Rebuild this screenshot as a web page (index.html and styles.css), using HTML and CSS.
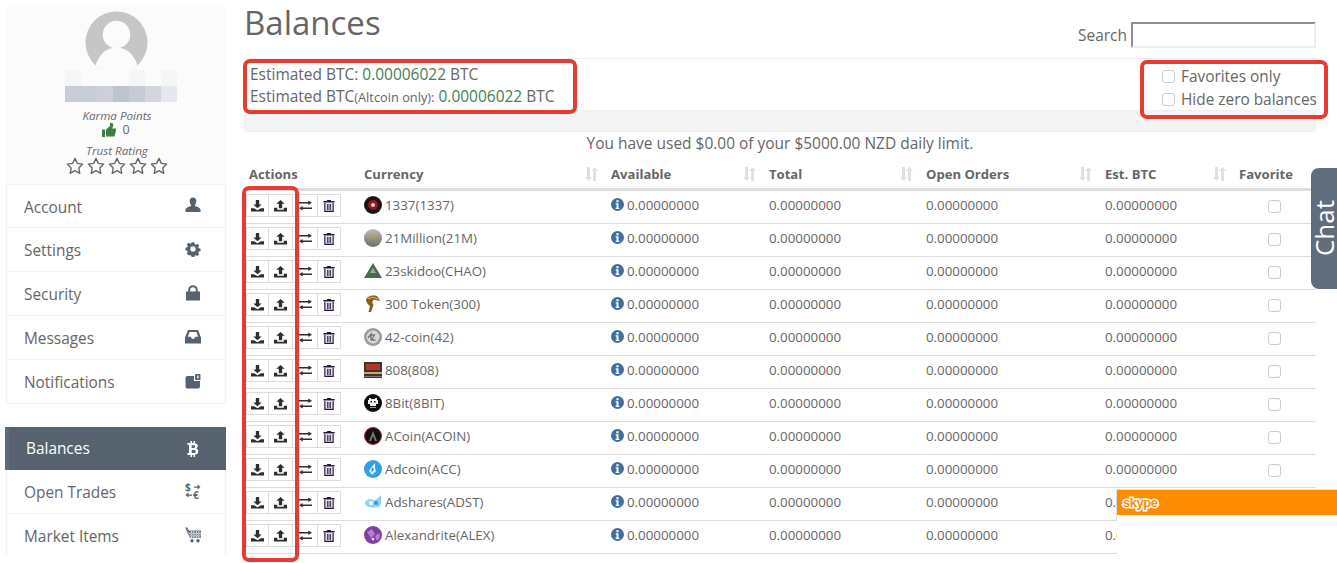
FILE: index.html
```html
<!DOCTYPE html>
<html lang="en">
<head>
<meta charset="utf-8">
<title>Balances</title>
<link rel="stylesheet" href="styles.css">
</head>
<body>
<svg class="defs" aria-hidden="true">
  <symbol id="i-down" viewBox="0 0 14 14"><path d="M5.200 1h3.600v5h2.700L7 10 2.500 6h2.700zM0 10h3.300L7 12.200 10.700 10H14v3.500H0z"/></symbol>
  <symbol id="i-up" viewBox="0 0 14 14"><path d="M7 1l4.500 4H8.800v5H5.200V5H2.500zM0 9.500h3.500v2.200h7V9.500H14v4H0z"/></symbol>
  <symbol id="i-swap" viewBox="0 0 14 14"><path d="M0 3.300h10V1.500L14 4l-4 2.500V4.800H0zM14 9.200H4V7.500L0 10l4 2.500V10.700h10z"/></symbol>
  <symbol id="i-trash" viewBox="0 0 14 14"><path fill="#24123f" d="M5 0h4l.6 1.300H13.500V3H.5V1.300h3.900z"/><path fill="none" stroke="#24123f" stroke-width="1.400" d="M2.200 3.500v9.800h9.600V3.500"/><path fill="#24123f" d="M4.500 4.500h1.100v7.500H4.500zM6.450 4.500h1.100v7.500H6.450zM8.400 4.500h1.100v7.500H8.400z"/></symbol>
  <symbol id="i-info" viewBox="0 0 14 14"><path fill-rule="evenodd" d="M7 0a7 7 0 1 1 0 14A7 7 0 0 1 7 0zM5.800 2.300v2.200h2.400V2.300zM5 5.700v1.300h1v3.500H5v1.300h4v-1.300H8V5.700z"/></symbol>
  <symbol id="i-sort" viewBox="0 0 13 14"><path d="M2 0h3v10h2l-3.500 4L0 10h2zM9.500 0 13 4h-2v10H8V4H6z"/></symbol>
  <symbol id="i-star" viewBox="0 0 20 20"><path fill="none" stroke="#666" stroke-width="1.500" stroke-linejoin="round" d="m10 1.500 2.600 5.600 6 .8-4.400 4.200 1.100 6.100L10 15.200 4.700 18.200l1.100-6.100L1.400 7.900l6-.8z"/></symbol>
</svg>

<div class="page">
  <aside class="side">
    <section class="profile">
      <svg class="avatar" viewBox="0 0 64 64"><defs><clipPath id="av"><circle cx="32" cy="32" r="31.500"/></clipPath></defs><circle cx="32" cy="32" r="31.500" fill="#c6c6c6"/><g clip-path="url(#av)" fill="#fbfbfb"><circle cx="32" cy="24" r="14"/><ellipse cx="32" cy="62" rx="22" ry="25"/></g></svg>
      <div class="blur">
        <i class="b1"></i><i class="b0"></i><i class="b0"></i><i class="b0"></i><i class="b1"></i><i class="b0"></i><i class="b1"></i>
        <i class="b2"></i><i class="b2"></i><i class="b3"></i><i class="b4"></i><i class="b5"></i><i class="b6"></i><i class="b7"></i>
      </div>
      <div class="cap cap-karma">Karma Points</div>
      <div class="karma">
        <svg class="thumb" viewBox="0 0 14 14"><path fill="#3f7f3f" d="M0 6.500h3V14H0zM4 6.500 8 3V0h2.500l.8 2-1 3.500H14v2l-1.500 6H4z"/></svg>
        <span>0</span>
      </div>
      <div class="cap cap-trust">Trust Rating</div>
      <div class="stars">
        <svg><use href="#i-star"/></svg><svg><use href="#i-star"/></svg><svg><use href="#i-star"/></svg><svg><use href="#i-star"/></svg><svg><use href="#i-star"/></svg>
      </div>
    </section>
    <nav class="nav">
      <a class="nav-item"><span>Account</span>
        <svg viewBox="0 0 16 16"><path d="M8 .5c2.200 0 3.300 1.500 3.300 3.600S10.300 7.500 9.800 9c2.200.8 5.200 1.500 5.700 3.500V15H.5v-2.500C1 10.500 4 9.800 6.200 9 5.700 7.500 4.700 6.200 4.700 4.100S5.800.5 8 .5z"/></svg></a>
      <a class="nav-item"><span>Settings</span>
        <svg viewBox="-1 -1 18 18"><path fill-rule="evenodd" d="M6.500.5h3l.4 2 1.300.6 1.800-1.100 2 2-1.100 1.800.6 1.300 2 .4v3l-2 .4-.6 1.300 1.100 1.800-2 2-1.800-1.100-1.300.6-.4 2h-3l-.4-2-1.300-.6L3 15l-2-2 1.100-1.800-.6-1.300-2-.4v-3l2-.4.6-1.300L1 3l2-2 1.800 1.100 1.300-.6zM8 5a3 3 0 1 0 0 6 3 3 0 0 0 0-6z"/></svg></a>
      <a class="nav-item"><span>Security</span>
        <svg viewBox="0 0 16 16"><path fill-rule="evenodd" d="M1 6.500h2.200V5a4.800 4.800 0 0 1 9.600 0v1.500H15V15.500H1zM5.200 6.500h5.600V5a2.800 2.800 0 0 0-5.600 0z"/></svg></a>
      <a class="nav-item"><span>Messages</span>
        <svg viewBox="0 0 16 16"><path fill-rule="evenodd" d="M3 1h10l3 7.500V14.500H0V8.500zM4.500 3 2.800 7.800h3l1 2h2.400l1-2h3L11.500 3z"/></svg></a>
      <a class="nav-item"><span>Notifications</span>
        <svg viewBox="0 0 16 16"><path d="M2.500 3H9v5h6v5.500A2 2 0 0 1 13 15.500H2.500a2 2 0 0 1-2-2V5a2 2 0 0 1 2-2z"/><rect x="10" y="1" width="5.500" height="6" rx="1"/><path fill="#fff" d="M12.200 2.500h1.300v3h-1.300z"/></svg></a>
      <div class="nav-gap"></div>
      <a class="nav-item nav-active"><span>Balances</span>
        <svg viewBox="0 0 16 16"><path fill-rule="evenodd" d="M5.500 0h1.500v2h1.500V0H10v2.200c2 .4 2.800 1.500 2.800 2.800 0 1.200-.6 2-1.600 2.500 1.300.4 2.100 1.400 2.100 2.800 0 2-1.300 3.200-3.300 3.500V16H8.500v-2H7v2H5.500v-2H2.500v-2H4V4H2.500V2h3zM6.700 4.300v2.600h2.100c.8 0 1.300-.5 1.300-1.300s-.5-1.300-1.300-1.300zM6.700 9v2.900h2.600c.9 0 1.400-.6 1.400-1.500S10.200 9 9.300 9z"/></svg></a>
      <a class="nav-item"><span>Open Trades</span>
        <svg viewBox="0 0 16 16"><text x="0" y="7.500" class="cur">$</text><text x="8" y="15.500" class="cur">€</text><path d="M9 3.500h3.500V1.500L15.500 4l-3 2.500V4.800H9zM7 11.500H3.500V9.500L.5 12l3 2.500V12.800H7z"/></svg></a>
      <a class="nav-item nav-last"><span>Market Items</span>
        <svg viewBox="0 0 16 16"><path d="M0 .5h2.500l1.500 3H16V11H5z" opacity=".85"/><path fill="#fff" d="M6 4v7h.7V4zm2.500 0v7h.7V4zm2.500 0v7h.7V4zm2.500 0v7h.7V4zM4 6.200h12v.7H4zm.5 2.300h11v.7h-11z"/><circle cx="7" cy="13.800" r="1.700"/><circle cx="13" cy="13.800" r="1.700"/></svg></a>
    </nav>
  </aside>

  <main class="main">
    <header class="head">
      <h1>Balances</h1>
      <label class="search">Search <input type="text" class="search-input"></label>
    </header>

    <section class="summary">
      <div class="est">
        <div>Estimated BTC: <span class="pos">0.00006022</span> BTC</div>
        <div>Estimated BTC<small>(Altcoin only):</small> <span class="pos">0.00006022</span> BTC</div>
      </div>
      <div class="filters">
        <label><input type="checkbox" class="cb"> Favorites only</label>
        <label><input type="checkbox" class="cb"> Hide zero balances</label>
      </div>
    </section>
    <div class="band"></div>
    <p class="notice">You have used $0.00 of your $5000.00 NZD daily limit.</p>

    <table class="grid">
      <colgroup><col class="c1"><col class="c2"><col class="c3"><col class="c4"><col class="c5"><col class="c6"><col class="c7"></colgroup>
      <thead>
        <tr>
          <th>Actions</th>
          <th><div class="th"><span>Currency</span><svg><use href="#i-sort"/></svg></div></th>
          <th><div class="th"><span>Available</span><svg><use href="#i-sort"/></svg></div></th>
          <th><div class="th"><span>Total</span><svg><use href="#i-sort"/></svg></div></th>
          <th><div class="th"><span>Open Orders</span><svg><use href="#i-sort"/></svg></div></th>
          <th><div class="th"><span>Est. BTC</span><svg><use href="#i-sort"/></svg></div></th>
          <th>Favorite</th>
        </tr>
      </thead>
      <tbody>
        <tr>
          <td class="act"><div class="btns"><a><svg><use href="#i-down"/></svg></a><a><svg><use href="#i-up"/></svg></a><a><svg><use href="#i-swap"/></svg></a><a><svg><use href="#i-trash"/></svg></a></div></td>
          <td><div class="coin"><svg viewBox="0 0 18 18"><circle cx="9" cy="9" r="9" fill="#1c1416"/><circle cx="9" cy="9" r="5" fill="#8d1c22"/><circle cx="9" cy="9" r="2" fill="#e8c8c8"/></svg>1337(1337)</div></td>
          <td><svg class="info"><use href="#i-info"/></svg>0.00000000</td><td>0.00000000</td><td>0.00000000</td><td>0.00000000</td><td class="fav"><input type="checkbox" class="cb"></td>
        </tr>
        <tr>
          <td class="act"><div class="btns"><a><svg><use href="#i-down"/></svg></a><a><svg><use href="#i-up"/></svg></a><a><svg><use href="#i-swap"/></svg></a><a><svg><use href="#i-trash"/></svg></a></div></td>
          <td><div class="coin"><svg viewBox="0 0 18 18"><defs><linearGradient id="g21" x1="0" y1="0" x2="0" y2="1"><stop offset="0" stop-color="#bdbbb3"/><stop offset="1" stop-color="#6f6d66"/></linearGradient></defs><circle cx="9" cy="9" r="9" fill="url(#g21)"/><path d="M6 9h7v1H6z" fill="#a89a6a"/></svg>21Million(21M)</div></td>
          <td><svg class="info"><use href="#i-info"/></svg>0.00000000</td><td>0.00000000</td><td>0.00000000</td><td>0.00000000</td><td class="fav"><input type="checkbox" class="cb"></td>
        </tr>
        <tr>
          <td class="act"><div class="btns"><a><svg><use href="#i-down"/></svg></a><a><svg><use href="#i-up"/></svg></a><a><svg><use href="#i-swap"/></svg></a><a><svg><use href="#i-trash"/></svg></a></div></td>
          <td><div class="coin"><svg viewBox="0 0 18 18"><path d="M9 1 18 16H0z" fill="#4c6a4e"/><path d="M9 6l3 5H6z" fill="#9ab08c"/></svg>23skidoo(CHAO)</div></td>
          <td><svg class="info"><use href="#i-info"/></svg>0.00000000</td><td>0.00000000</td><td>0.00000000</td><td>0.00000000</td><td class="fav"><input type="checkbox" class="cb"></td>
        </tr>
        <tr>
          <td class="act"><div class="btns"><a><svg><use href="#i-down"/></svg></a><a><svg><use href="#i-up"/></svg></a><a><svg><use href="#i-swap"/></svg></a><a><svg><use href="#i-trash"/></svg></a></div></td>
          <td><div class="coin"><svg viewBox="0 0 18 18"><path d="M2 5C3 1 10-1 14 2l2 4-6-1.500C8 6 8 8 9.500 10L7 17H4.500L6 11C3.500 9 2 7 2 5z" fill="#8a5a1c"/><path d="M4 4c3-2 7-2 10 0" stroke="#d8a850" stroke-width="1.200" fill="none"/></svg>300 Token(300)</div></td>
          <td><svg class="info"><use href="#i-info"/></svg>0.00000000</td><td>0.00000000</td><td>0.00000000</td><td>0.00000000</td><td class="fav"><input type="checkbox" class="cb"></td>
        </tr>
        <tr>
          <td class="act"><div class="btns"><a><svg><use href="#i-down"/></svg></a><a><svg><use href="#i-up"/></svg></a><a><svg><use href="#i-swap"/></svg></a><a><svg><use href="#i-trash"/></svg></a></div></td>
          <td><div class="coin"><svg viewBox="0 0 18 18"><circle cx="9" cy="9" r="9" fill="#9a9a9a"/><circle cx="9" cy="9" r="6.500" fill="#d8d8d8"/><path d="M4 10l3-4v6M7.500 7h3l-3 5h4" stroke="#777" fill="none" stroke-width="1.300"/></svg>42-coin(42)</div></td>
          <td><svg class="info"><use href="#i-info"/></svg>0.00000000</td><td>0.00000000</td><td>0.00000000</td><td>0.00000000</td><td class="fav"><input type="checkbox" class="cb"></td>
        </tr>
        <tr>
          <td class="act"><div class="btns"><a><svg><use href="#i-down"/></svg></a><a><svg><use href="#i-up"/></svg></a><a><svg><use href="#i-swap"/></svg></a><a><svg><use href="#i-trash"/></svg></a></div></td>
          <td><div class="coin"><svg viewBox="0 0 18 18"><path d="M0 1h18v16H0z" fill="#3a3632"/><path d="M2 3h14v6H2z" fill="#b8332a"/><path d="M0 11h18v2H0z" fill="#c9a868"/><path d="M0 15h18v1H0z" fill="#7a7a7a"/></svg>808(808)</div></td>
          <td><svg class="info"><use href="#i-info"/></svg>0.00000000</td><td>0.00000000</td><td>0.00000000</td><td>0.00000000</td><td class="fav"><input type="checkbox" class="cb"></td>
        </tr>
        <tr>
          <td class="act"><div class="btns"><a><svg><use href="#i-down"/></svg></a><a><svg><use href="#i-up"/></svg></a><a><svg><use href="#i-swap"/></svg></a><a><svg><use href="#i-trash"/></svg></a></div></td>
          <td><div class="coin"><svg viewBox="0 0 18 18"><circle cx="9" cy="9" r="9" fill="#0c0c0c"/><path d="M5 4h2v1h4V4h2v2h1v4h-2v2H6v-2H4V6h1z" fill="#eee"/><path d="M6.500 7h1.500v1.500H6.500zm3.500 0h1.500v1.500H10z" fill="#0c0c0c"/><path d="M6 13h6v1H6z" fill="#999"/></svg>8Bit(8BIT)</div></td>
          <td><svg class="info"><use href="#i-info"/></svg>0.00000000</td><td>0.00000000</td><td>0.00000000</td><td>0.00000000</td><td class="fav"><input type="checkbox" class="cb"></td>
        </tr>
        <tr>
          <td class="act"><div class="btns"><a><svg><use href="#i-down"/></svg></a><a><svg><use href="#i-up"/></svg></a><a><svg><use href="#i-swap"/></svg></a><a><svg><use href="#i-trash"/></svg></a></div></td>
          <td><div class="coin"><svg viewBox="0 0 18 18"><circle cx="9" cy="9" r="8.500" fill="#111" stroke="#b3202c"/><path d="M9 4l4 10h-2L9 9l-2 5H5z" fill="#777"/></svg>ACoin(ACOIN)</div></td>
          <td><svg class="info"><use href="#i-info"/></svg>0.00000000</td><td>0.00000000</td><td>0.00000000</td><td>0.00000000</td><td class="fav"><input type="checkbox" class="cb"></td>
        </tr>
        <tr>
          <td class="act"><div class="btns"><a><svg><use href="#i-down"/></svg></a><a><svg><use href="#i-up"/></svg></a><a><svg><use href="#i-swap"/></svg></a><a><svg><use href="#i-trash"/></svg></a></div></td>
          <td><div class="coin"><svg viewBox="0 0 18 18"><circle cx="9" cy="9" r="9" fill="#2aa3e8"/><path d="M11 3 7 8l-2 3 3 4 4-4-1-3z" fill="#e8f6fe"/><path d="M9 7l1 3-2 2-1-2z" fill="#2aa3e8"/></svg>Adcoin(ACC)</div></td>
          <td><svg class="info"><use href="#i-info"/></svg>0.00000000</td><td>0.00000000</td><td>0.00000000</td><td>0.00000000</td><td class="fav"><input type="checkbox" class="cb"></td>
        </tr>
        <tr>
          <td class="act"><div class="btns"><a><svg><use href="#i-down"/></svg></a><a><svg><use href="#i-up"/></svg></a><a><svg><use href="#i-swap"/></svg></a><a><svg><use href="#i-trash"/></svg></a></div></td>
          <td><div class="coin"><svg viewBox="0 0 18 18"><path d="M1 9c1-2 4-3 6-3 2 0 2 2 4 1l3-2 3-3v8c0 3-3 5-5 4-2 1-3 1-5 0-3 1-6-2-6-5z" fill="#8fd0f4"/><circle cx="7" cy="10" r="2" fill="#fff"/><circle cx="12" cy="10" r="2" fill="#3f8fe0"/></svg>Adshares(ADST)</div></td>
          <td><svg class="info"><use href="#i-info"/></svg>0.00000000</td><td>0.00000000</td><td>0.00000000</td><td>0.00000000</td><td class="fav"><input type="checkbox" class="cb"></td>
        </tr>
        <tr>
          <td class="act"><div class="btns"><a><svg><use href="#i-down"/></svg></a><a><svg><use href="#i-up"/></svg></a><a><svg><use href="#i-swap"/></svg></a><a><svg><use href="#i-trash"/></svg></a></div></td>
          <td><div class="coin"><svg viewBox="0 0 18 18"><circle cx="9" cy="9" r="9" fill="#7d3f9e"/><path d="M3 6l5-3 3 5-4 4zM11 10l4-3 1 4-3 4z" fill="#b57fd0"/><circle cx="9" cy="13" r="1.500" fill="#e0c8ee"/></svg>Alexandrite(ALEX)</div></td>
          <td><svg class="info"><use href="#i-info"/></svg>0.00000000</td><td>0.00000000</td><td>0.00000000</td><td>0.00000000</td><td class="fav"><input type="checkbox" class="cb"></td>
        </tr>
      </tbody>
    </table>

    <div class="mark mark-est"></div>
    <div class="mark mark-filters"></div>
    <div class="mark mark-actions"></div>
  </main>
</div>

<div class="chat"><span>Chat</span></div>
<div class="skype"><div class="skype-bar"><span class="skype-logo">skype</span></div></div>
</body>
</html>
```

FILE: styles.css
```css
html, body { margin: 0; height: 563px; overflow: hidden; background: #fff; }
body { font-family: "Open Sans", "Liberation Sans", sans-serif; font-size: 13.33px; color: #666; position: relative; }
.defs { position: absolute; width: 0; height: 0; }
.page { display: flex; align-items: flex-start; padding-left: 5px; }

/* Sidebar */
.side { width: 221px; padding-top: 5px; flex: none; }
.profile { height: 179px; margin-left: 1px; background: #fbfbfb; display: flex; flex-direction: column; align-items: center; box-sizing: border-box; padding-top: 6px; }
.avatar { width: 63px; height: 63px; display: block; }
.blur { display: grid; grid-template-columns: repeat(7, 16px); grid-auto-rows: 16px; margin: -4px 0 0 10px; position: relative; }
.b0 { background: #fbfbfb; } .b1 { background: #f5f6f6; }
.b2 { background: #c9cdd7; } .b3 { background: #cdd0da; } .b4 { background: #bec3d0; }
.b5 { background: #c6cbd7; } .b6 { background: #d3d6dc; } .b7 { background: #e6e8ed; }
.cap { font-size: 11.67px; font-style: italic; line-height: 14px; color: #6a6a6a; margin-left: 2px; }
.cap-karma { margin-top: 7px; }
.karma { display: flex; align-items: center; gap: 6px; height: 13px; font-size: 12.500px; }
.thumb { width: 14px; height: 14px; }
.cap-trust { margin-top: 8px; height: 12px; line-height: 14px; }
.stars { display: flex; gap: 3px; margin: 1px 0 0 2px; }
.stars svg { width: 18px; height: 18px; display: block; }
.nav { display: flex; flex-direction: column; }
.nav-item { height: 41px; margin-left: 1px; padding: 2px 24px 0 17px; display: flex; align-items: center; justify-content: space-between; font-size: 15.4px; color: #666; border: solid #f2f2f2; border-width: 0 1px 1px 1px; }
.nav-item:first-child { border-top: 1px solid #f2f2f2; height: 40px; }
.nav-item svg { width: 16px; height: 16px; fill: #56636f; margin-bottom: 4px; }
.nav-gap { height: 23px; }
.nav-active { margin-left: 0; background: #56636f; color: #fff; border: 0; border-left: 4px solid #5f6d7a; padding: 0 25px 0 17px; height: 43px; }
.nav-active svg { fill: #fff; margin-bottom: 0; }
.nav-last { border-bottom: 0; }
.cur { font-size: 10px; font-weight: 700; }

/* Main */
.main { width: 1072px; margin-left: 18px; position: relative; flex: none; }
.head { height: 58px; display: flex; justify-content: space-between; align-items: flex-start; }
h1 { margin: 0; font-size: 33px; font-weight: 400; line-height: 46px; color: #666; }
.search { display: flex; align-items: center; gap: 4px; margin-top: 22px; font-size: 15.47px; white-space: nowrap; }
.search-input { width: 181px; height: 22px; padding: 0; border: 2px solid #eee; border-top-color: #8f8f8f; border-left-color: #8f8f8f; background: #fff; }
.summary { height: 51px; border-top: 1px solid #eee; border-bottom: 1px solid #eee; display: flex; justify-content: space-between; font-size: 15.47px; }
.est { padding: 4px 0 0 6px; line-height: 22px; }
.est small { font-size: 12.8px; }
.pos { color: #3f7f56; }
.filters { display: flex; flex-direction: column; padding: 6px 0 0; width: 154px; line-height: 23px; font-size: 15.4px; }
.filters label { display: flex; align-items: center; gap: 6px; white-space: nowrap; }
.cb { appearance: none; -webkit-appearance: none; flex: none; width: 13px; height: 13px; margin: 0; border: 1px solid #ccc; border-radius: 3px; background: #fff; box-sizing: border-box; display: inline-block; }
.band { height: 20px; background: #f4f4f4; border: solid #eee; border-width: 0 1px 1px; border-radius: 0 0 4px 4px; }
.notice { margin: 0; height: 21px; line-height: 22px; text-align: center; font-size: 15.47px; }

/* Table */
.grid { width: 1072px; table-layout: fixed; border-collapse: separate; border-spacing: 0; }
.c1 { width: 115px; } .c2 { width: 247px; } .c3 { width: 158px; } .c4 { width: 157px; } .c5 { width: 179px; } .c6 { width: 134px; } .c7 { width: 82px; }
th { text-align: left; font-size: 13.1px; font-weight: 700; padding: 11px 8px 4px 5px; line-height: 20px; border-bottom: 3px solid #ddd; color: #666; }
.th { display: flex; justify-content: space-between; align-items: center; }
.th svg { width: 13px; height: 14px; fill: #e0e0e0; }
td { padding: 5px 5px 9px; line-height: 18px; height: 18px; border-bottom: 1px solid #ddd; white-space: nowrap; vertical-align: top; }
.act { padding: 3px 0 0 2px; height: 29px; }
.btns { display: flex; }
.btns a { height: 21px; border: 1px solid #ddd; border-left-width: 0; display: flex; align-items: center; justify-content: center; }
.btns a:nth-child(1) { width: 20px; padding-right: 1px; border-left-width: 1px; }
.btns a:nth-child(2) { width: 23px; }
.btns a:nth-child(3) { width: 24px; }
.btns a:nth-child(4) { width: 22px; }
.btns svg { width: 13px; height: 13px; fill: #2e2e2e; }
.btns a:nth-child(4) svg { width: 12px; height: 12px; }
.coin { display: flex; align-items: center; gap: 3px; }
.coin svg { width: 18px; height: 18px; flex: none; }
.info { width: 13px; height: 13px; fill: #3f6f9f; margin-right: 3px; vertical-align: -1px; }
.fav { text-align: center; padding: 9px 1px 0 0; height: 23px; line-height: 13px; }
.fav .cb { vertical-align: top; }

/* Annotations drawn over the page */
.mark { position: absolute; border: 4px solid #e63c2f; border-radius: 7px; box-sizing: border-box; pointer-events: none; }
.mark-est { left: -1px; top: 59px; width: 334px; height: 55px; }
.mark-filters { left: 896px; top: 60px; width: 188px; height: 59px; }
.mark-actions { left: -2px; top: 186px; width: 57px; height: 376px; }

/* Floating widgets */
.chat { position: absolute; left: 1311px; top: 168px; width: 26px; height: 121px; background: #5f6d7c; border-radius: 8px 0 0 8px; display: flex; align-items: center; justify-content: center; color: #fff; }
.chat span { writing-mode: vertical-rl; transform: rotate(180deg); font-size: 26px; line-height: 26px; }
.skype { position: absolute; left: 1117px; top: 489px; width: 220px; height: 74px; background: #fff; border-top: 1px solid #ddd; box-sizing: border-box; }
.skype::before { content: ""; position: absolute; left: -1px; top: 0; width: 1px; height: 31px; background: #ddd; }
.skype-bar { height: 25px; background: #ff8c00; display: flex; align-items: center; padding-left: 6px; }
.skype-logo { color: #ff8c00; font: 700 13px "Liberation Sans", sans-serif; -webkit-text-stroke: 3px #fff; paint-order: stroke fill; letter-spacing: -.5px; }
```
